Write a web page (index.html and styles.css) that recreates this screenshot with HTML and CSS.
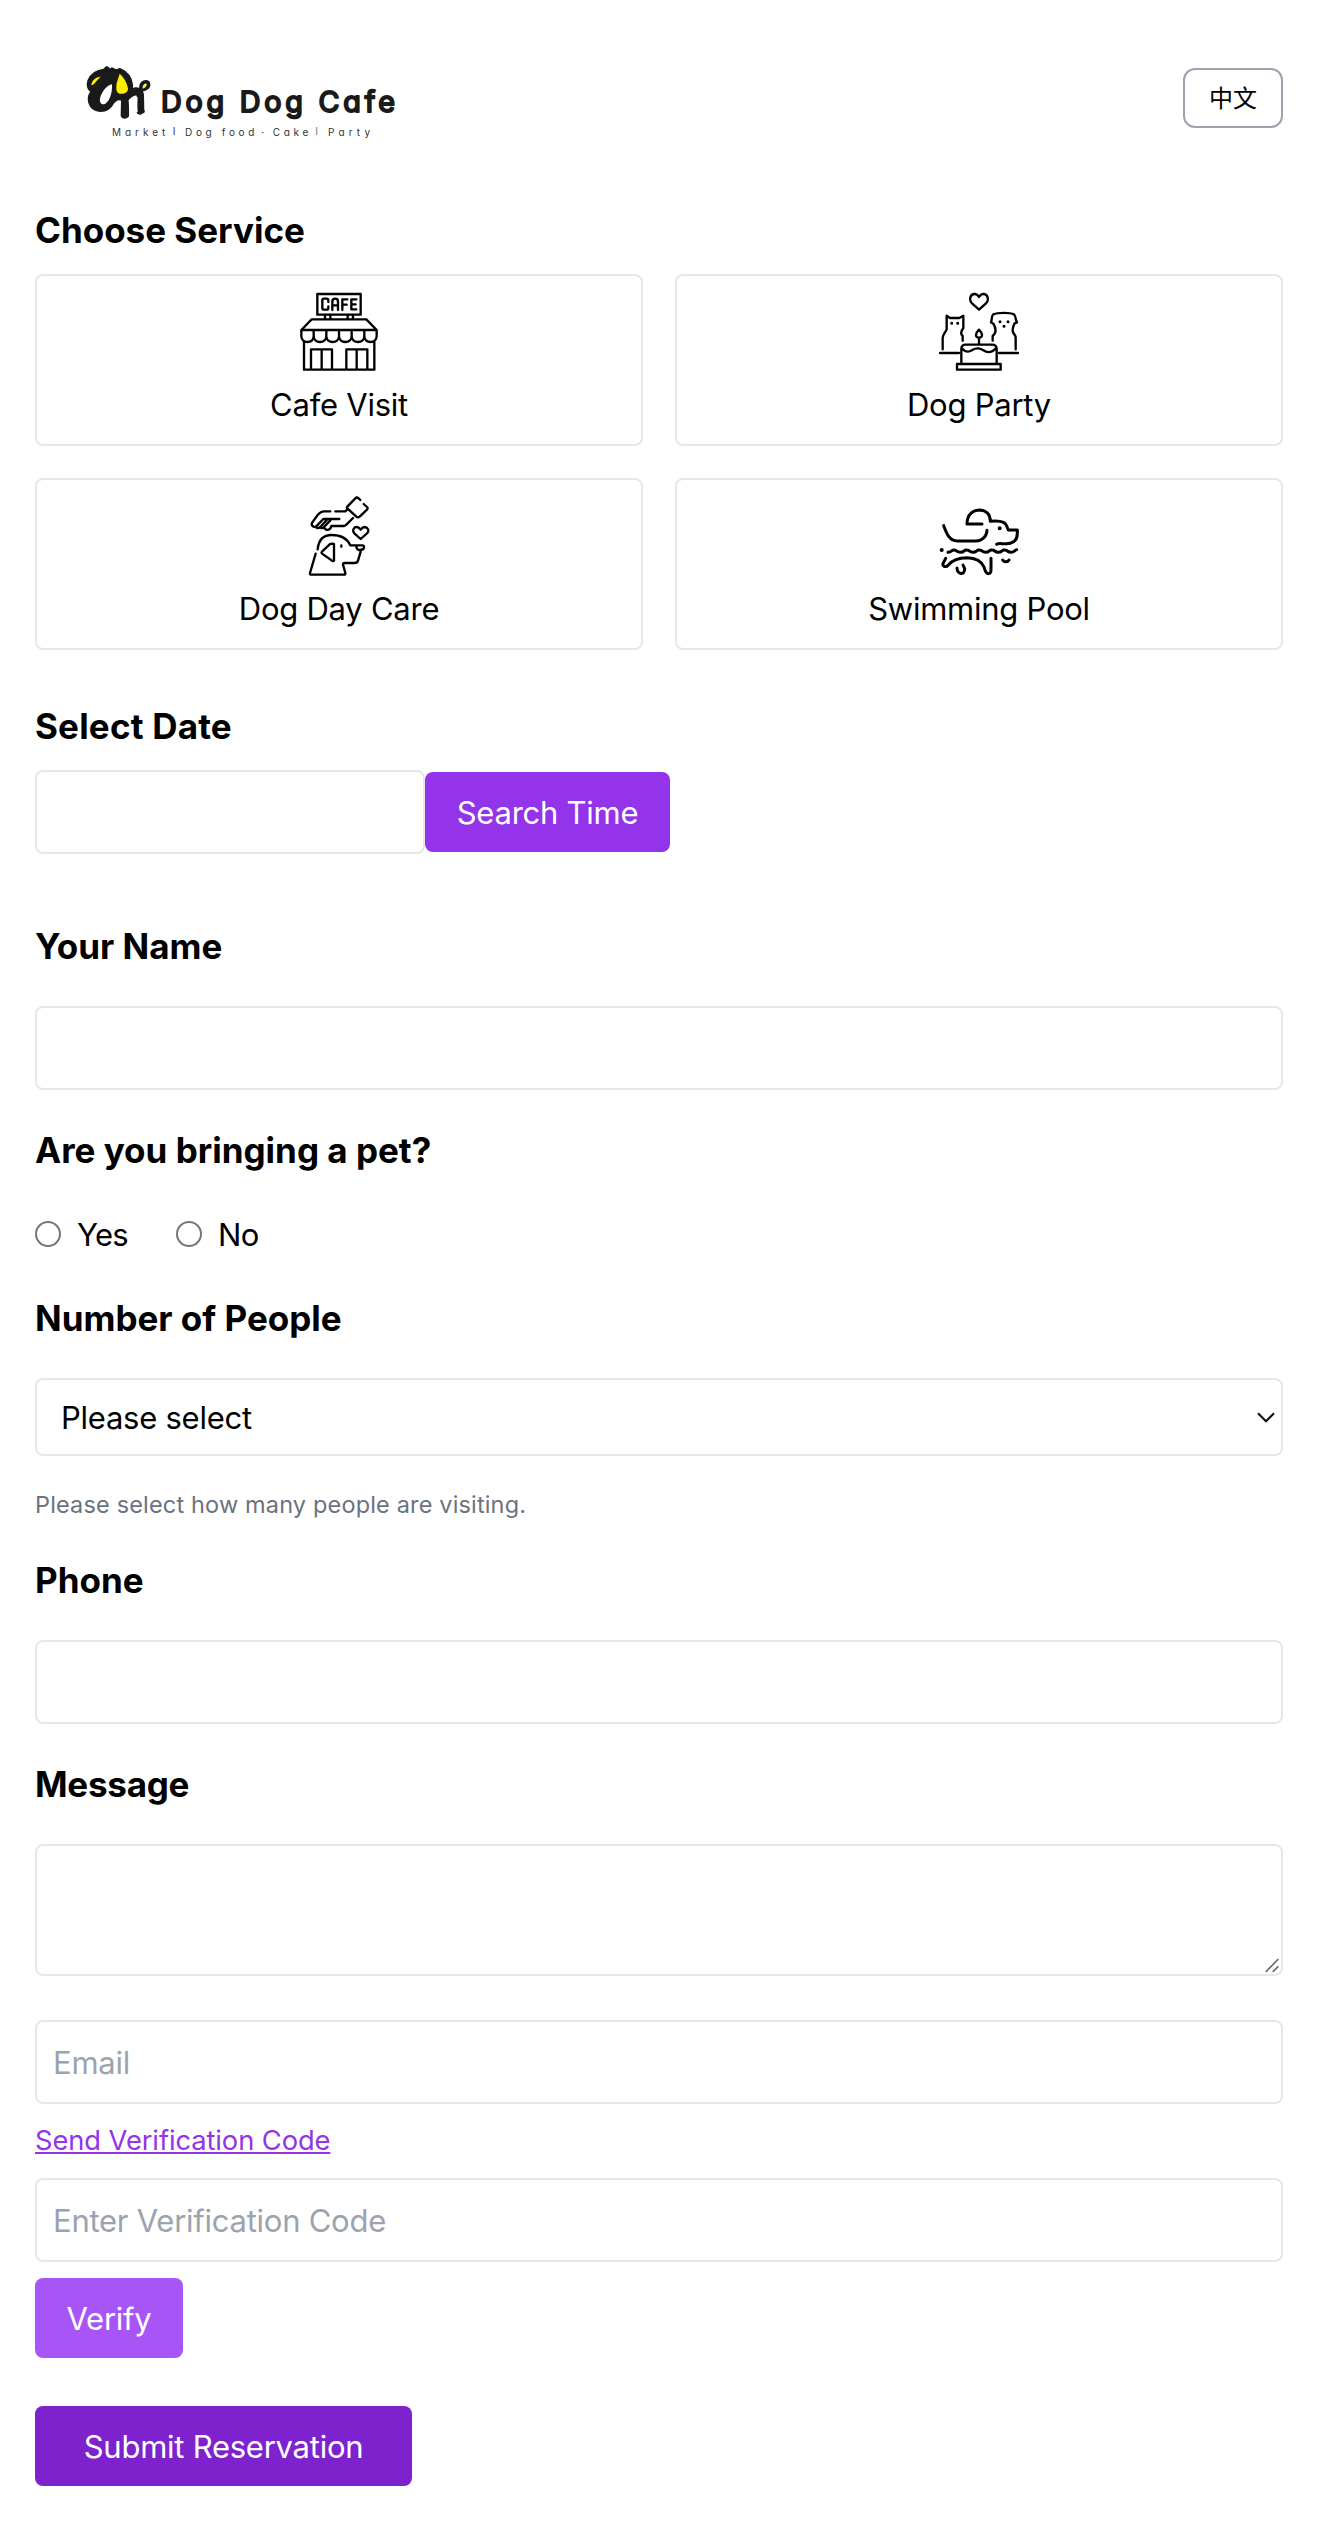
FILE: index.html
```html
<!DOCTYPE html>
<html lang="en">
<head>
<meta charset="utf-8">
<title>Dog Dog Cafe</title>
<link rel="stylesheet" href="styles.css">
</head>
<body>
<header class="header">
  <svg class="logo" viewBox="0 0 1020 300" role="img" aria-label="Dog Dog Cafe">
    <g fill="none" stroke="#1a1a1a" stroke-linecap="round" stroke-linejoin="round">
      <path fill="#1a1a1a" stroke-width="8" d="M110 52L120 60L126 56L138 62L150 58L164 66C180 78 188 96 185 122L195 116C208 114 218 122 218 134L219 182C216 190 208 192 204 188L207 143C204 132 196 138 185 142C174 160 174 178 173 198C168 204 159 204 156 198L157 150C145 142 137 150 129 158C121 174 108 182 92 182C66 180 54 162 58 138L66 122C54 120 52 104 56 92C64 72 82 62 102 60Z"/>
      <path stroke-width="11" d="M207 186L219 184M214 120C208 100 226 90 234 98C240 110 228 120 214 119"/>
    </g>
    <path fill="#fff" d="M126 103C112 104 94 126 90 146C88 158 96 167 106 161C122 151 127 124 126 103ZM176 150C182 142 194 134 200 137L203 186L178 192Z"/>
    <path fill="#ffee00" d="M149 71C162 82 172 100 174 116C174 127 162 133 150 131C138 129 138 116 140 100ZM92 80C78 80 65 92 64 106C74 103 80 91 92 80ZM229 102C220 103 218 108 218 116C226 114 230 109 229 102Z"/>
    <text class="logo-name" x="273" y="186" textLength="702">Dog Dog Cafe</text>
    <text class="logo-tag" x="126" y="258" textLength="160">Market</text>
    <text class="logo-tag" x="308" y="256">I</text>
    <text class="logo-tag" x="345" y="258" textLength="208">Dog food</text>
    <text class="logo-tag" x="574" y="258">·</text>
    <text class="logo-tag" x="608" y="258" textLength="107">Cake</text>
    <text class="logo-tag thin" x="736" y="256">I</text>
    <text class="logo-tag" x="774" y="258" textLength="126">Party</text>
  </svg>
  <button class="lang" type="button">中文</button>
</header>

<form class="form">
  <h2 class="title">Choose Service</h2>
  <div class="services">
    <button class="card" type="button">
      <svg class="icon" viewBox="57 36 240 240">
        <path d="M112 42H242V104H112ZM135 104V117M151 104V117M203 104V117M219 104V117M95 118H259L290 150H64ZM64 150V168C64 192 101 192 101 168V150M101 168C101 192 139 192 139 168V150M139 168C139 192 177 192 177 168V150M177 168C177 192 215 192 215 168V150M215 168C215 192 253 192 253 168V150M253 168C253 192 290 192 290 168V150M72 186V269H283V186M93 269V208H156V269M125 208V269M199 269V208H262V269M230 208V269"/>
        <path d="M145 66V61Q145 56 140 56H132Q127 56 127 61V83Q127 89 133 89H140Q145 89 145 83V79M157 90V65Q157 56 166 56Q174 56 174 65V90M157 76H174M187 90V58H202M187 74H200M229 58H214V88H229M214 73H227"/>
      </svg>
      <span>Cafe Visit</span>
    </button>
    <button class="card" type="button">
      <svg class="icon" viewBox="57 36 240 240">
        <path d="M177 89L156 70C147 62 149 44 162 42C170 41 174 46 177 51C180 46 184 41 192 42C205 44 207 62 198 70ZM68 208V174C68 163 77 157 80 148V107L90 114H118L130 107V144C121 156 122 163 128 168V182M60 219H117M237 219H294M111 252H242V269H111ZM124 252V207Q124 194 137 194H216Q230 194 230 207V252M125 204C138 220 148 216 157 210C168 203 182 204 190 211C203 220 216 218 229 203M177 194V174M177 149C164 162 166 173 177 173C188 173 190 162 177 149ZM218 182V168C229 159 229 146 220 131L213 127C217 119 213 108 220 103C233 97 270 97 282 103C289 109 285 120 291 127L283 131C276 146 276 156 283 163Q287 168 287 174V208"/>
        <path class="dots" d="M95 130h.1M113 130h.1M240 125h.1M264 125h.1M252 139h.1"/>
      </svg>
      <span>Dog Party</span>
    </button>
    <button class="card" type="button">
      <svg class="icon" viewBox="57 33 240 240">
        <path d="M107 206L90 264Q89 269 94 269H192Q197 269 196 264L189 239Q188 234 194 234H224Q232 234 234 227L244 193M113 193C116 162 133 150 155 150C184 150 202 161 211 181H248Q253 182 252 188Q251 195 241 195H236Q229 192 229 182M162 177V227Q161 230 156 227L126 206Q123 203 126 200L149 178Q154 175 162 177ZM184 181V185"/>
        <path d="M151 79H132C124 79 119 83 113 90L97 112C92 120 99 128 108 125L130 102H178M166 79H196L202 73M108 127Q114 132 121 126L141 104M121 127Q126 132 132 126L151 106M132 126C136 139 151 137 154 123H191Q196 122 200 118L219 99M202 65L226 40Q230 35 236 40L241 45M251 57L261 66Q265 70 261 74L239 95Q234 99 229 95L202 70Q199 67 202 65M242 162L223 145C216 137 221 126 230 126C237 126 239 130 242 134C245 130 247 126 254 126C264 127 269 138 261 145Z"/>
      </svg>
      <span>Dog Day Care</span>
    </button>
    <button class="card" type="button">
      <svg class="icon bold" viewBox="57 33 240 240">
        <path d="M71 122C81 149 89 168 112 168H168C188 168 200 153 201 136M186 117H141C141 88 159 75 179 75C202 76 211 91 211 109C233 107 256 107 260 123L265 135H292V144C292 168 277 176 260 176H246Q235 175 230 178M84 202C94 203 96 193 102 195C109 194 109 202 121 202C134 202 132 193 140 195C148 194 147 202 159 202C171 202 170 193 178 195C186 194 185 202 197 202C209 202 208 193 216 195C224 194 224 202 235 202C247 202 246 193 254 195C262 194 262 202 273 202C282 202 284 196 290 194M77 220L69 236C66 245 79 248 85 240C98 224 119 218 141 218C171 219 185 229 192 246C196 257 196 266 205 266C213 266 213 260 213 250V220M111 249C111 269 135 272 134 251L129 240M248 225C252 232 263 232 267 225"/>
        <path class="dots" d="M65 195h.1M239 130h.1"/>
      </svg>
      <span>Swimming Pool</span>
    </button>
  </div>

  <h2 class="title date-title">Select Date</h2>
  <div class="date-row">
    <input class="field date" type="text" aria-label="Date">
    <button class="btn search" type="button">Search Time</button>
  </div>

  <div class="details">
    <label class="title" for="name">Your Name</label>
    <input class="field" id="name" type="text">
    <div class="title pet-title">Are you bringing a pet?</div>
    <div class="radios">
      <label class="option"><input class="radio" type="radio" name="pet"><span>Yes</span></label>
      <label class="option"><input class="radio" type="radio" name="pet"><span>No</span></label>
    </div>
    <label class="title people-title" for="people">Number of People</label>
    <div class="control">
      <select class="field select" id="people"><option>Please select</option></select>
      <svg class="chevron" viewBox="0 0 18 11"><path d="M1 1.3L9 9.3L17 1.3"/></svg>
    </div>
    <p class="hint">Please select how many people are visiting.</p>
    <label class="title" for="phone">Phone</label>
    <input class="field" id="phone" type="tel">
    <label class="title message-title" for="message">Message</label>
    <div class="control">
      <textarea class="field message" id="message"></textarea>
      <svg class="grip" viewBox="0 0 14 15"><path d="M.7 14L13.3 1M7.7 14L13.3 8.4"/></svg>
    </div>
  </div>

  <div class="verify-block">
    <input class="field" type="email" placeholder="Email" aria-label="Email">
    <a class="link" href="#">Send Verification Code</a>
    <input class="field code" type="text" placeholder="Enter Verification Code" aria-label="Verification code">
    <button class="btn verify" type="button">Verify</button>
  </div>
  <button class="btn submit" type="button">Submit Reservation</button>
</form>
</body>
</html>
```
FILE: styles.css
```css
* { box-sizing: border-box; }

body {
  margin: 0;
  padding: 50px 45px 48px 35px;
  background: #fff;
  color: #000;
  font-family: Inter, "Noto Sans CJK SC", sans-serif;
  font-size: 31px;
  letter-spacing: -0.25px;
  line-height: 48px;
}

button, input, select, textarea {
  margin: 0;
  font: inherit;
  letter-spacing: inherit;
  color: inherit;
}

.header {
  display: flex;
  justify-content: space-between;
  height: 152px;
  padding-left: 35px;
}
.logo { width: 340px; height: 100px; letter-spacing: 0; }
.logo-name {
  font: 400 86px Inter, sans-serif;
  font-feature-settings: "cv11";
  fill: #1a1a1a;
  stroke: #1a1a1a;
  stroke-width: 6;
  stroke-linejoin: round;
}
.logo-tag {
  font: 400 30px Inter, sans-serif;
  font-feature-settings: "cv11";
  fill: #333;
}
.thin { fill: #777; }
.lang {
  width: 100px;
  height: 60px;
  margin-top: 18px;
  padding: 0 0 2px;
  border: 2px solid #9ca3af;
  border-radius: 12px;
  background: #fff;
  font-family: "Noto Sans CJK SC", sans-serif;
  font-size: 24px;
  letter-spacing: 0;
  line-height: 32px;
}

.title {
  display: block;
  margin: 0;
  font-size: 35px;
  font-weight: 700;
  letter-spacing: 0;
  line-height: 56px;
}
.date-title { letter-spacing: 0.2px; }
.message-title { letter-spacing: -0.25px; }

.services {
  display: grid;
  grid-template-columns: 1fr 1fr;
  gap: 32px;
  margin: 16px 0 48px;
}
.card {
  display: flex;
  flex-direction: column;
  align-items: center;
  justify-content: flex-start;
  gap: 9px;
  height: 172px;
  padding: 16px 16px 0;
  border: 2px solid #e5e7eb;
  border-radius: 8px;
  background: #fff;
}
.icon {
  flex: none;
  width: 80px;
  height: 80px;
  fill: none;
  stroke: #000;
  stroke-width: 7;
  stroke-linecap: round;
  stroke-linejoin: round;
}
.bold { stroke-width: 9; }
.dots { stroke-width: 9; }
.bold .dots { stroke-width: 12; }

.field {
  display: block;
  width: 100%;
  height: 84px;
  padding: 16px;
  border: 2px solid #e5e7eb;
  border-radius: 8px;
  background: #fff;
}
.field::placeholder { color: #9ca3af; opacity: 1; }

.date-row {
  display: flex;
  align-items: center;
  margin: 16px 0 64px;
}
.date { width: 390px; }

.btn {
  display: block;
  height: 80px;
  padding: 1px 0 0;
  border: 0;
  border-radius: 8px;
  color: #fff;
}
.search { width: 245px; background: #9333ea; }
.verify { width: 148px; margin-top: 16px; background: #a855f7; }
.submit { width: 377px; margin-top: 48px; background: #7e22ce; }

.details {
  display: flex;
  flex-direction: column;
  gap: 32px;
}
.radios { display: flex; gap: 48px; }
.option { display: flex; align-items: center; gap: 16px; height: 48px; letter-spacing: -0.7px; }
.option span { padding-top: 1px; }
.radio {
  appearance: none;
  width: 26px;
  height: 26px;
  border: 2px solid #767676;
  border-radius: 50%;
}
.control { position: relative; }
.select {
  appearance: none;
  height: 78px;
  padding: 1px 24px 0;
}
.chevron {
  position: absolute;
  right: 8px;
  top: 34px;
  width: 18px;
  height: 11px;
  fill: none;
  stroke: #111;
  stroke-width: 2.2;
}
.hint {
  height: 32px;
  margin: 0;
  padding-top: 1px;
  color: #6b7280;
  font-size: 23.5px;
  letter-spacing: 0.16px;
  line-height: 32px;
}
.message { height: 132px; resize: none; }
.grip {
  position: absolute;
  right: 4px;
  bottom: 3px;
  width: 14px;
  height: 15px;
  fill: none;
  stroke: #666;
  stroke-width: 1.6;
}

.verify-block { margin-top: 44px; }
.link {
  display: block;
  width: max-content;
  margin: 17px 0;
  color: #9333ea;
  font-size: 27.3px;
  letter-spacing: -0.08px;
  line-height: 40px;
  text-decoration-thickness: 2px;
  text-underline-offset: 2px;
}
```
